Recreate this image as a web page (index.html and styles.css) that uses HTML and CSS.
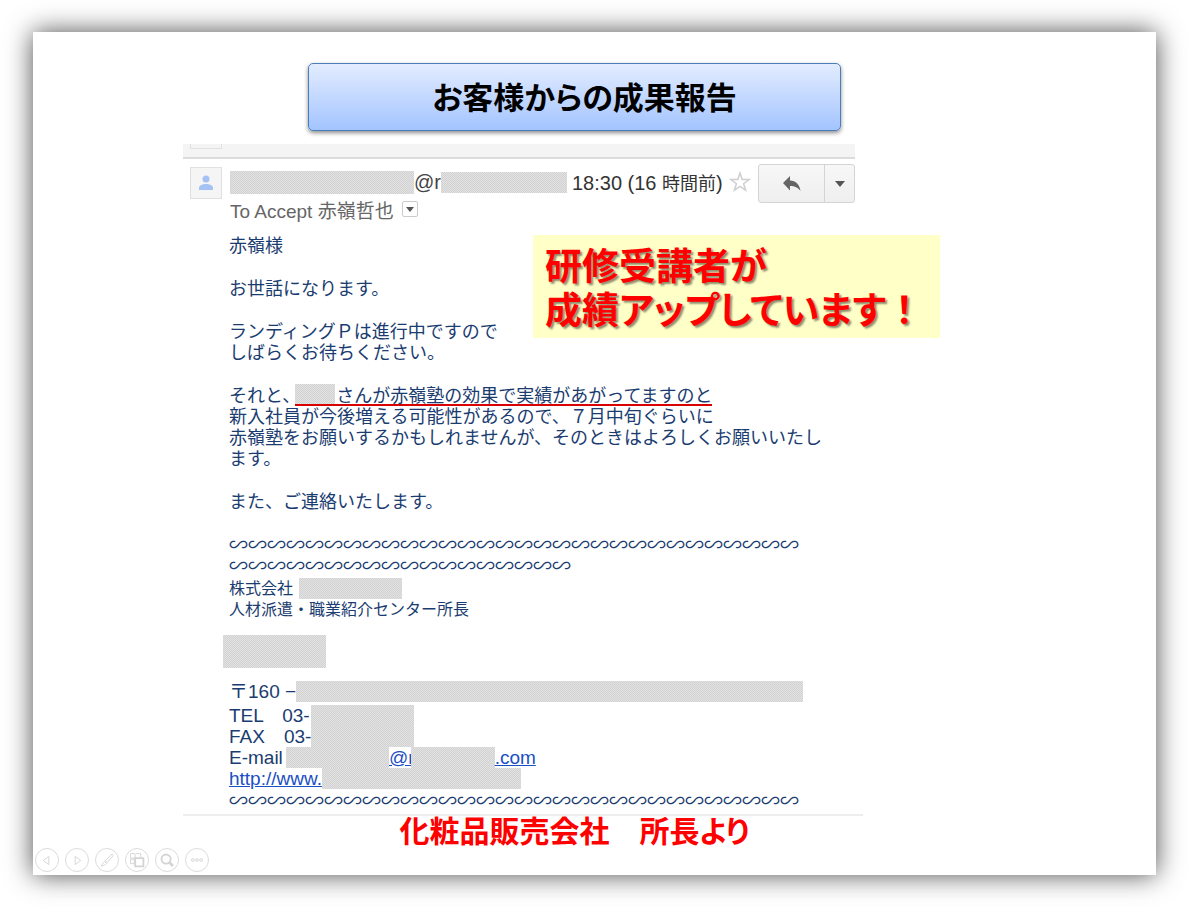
FILE: index.html
```html
<!DOCTYPE html>
<html lang="ja">
<head>
<meta charset="UTF-8">
<meta name="viewport" content="width=device-width, initial-scale=1.0">
<title>お客様からの成果報告</title>
<link rel="stylesheet" href="styles.css">
</head>
<body>

<main class="slide">
  <div class="slide-content">
    <h1 class="slide-title">お客様からの成果報告</h1>

    <article class="mail">
      <div class="mail-previous"><div class="previous-avatar"></div></div>

      <header class="mail-header">
        <div class="avatar">
          <svg width="16" height="16" viewBox="0 0 16 16" fill="#a4c2f4"><circle cx="8" cy="4" r="3.5"/><path d="M1 15v-2c0-3 4-4 7-4s7 1 7 4v2z"/></svg>
        </div>
        <div class="mail-meta">
          <div class="sender">
            <span class="mask mask-user"></span>@r<span class="mask mask-domain"></span>
            <span class="time">18:30 (16 <span class="ja">時間前</span>)</span>
            <button type="button" class="star" aria-label="スター">
              <svg width="22" height="22" viewBox="0 0 22 22" fill="#fff" stroke="#cfcfcf" stroke-width="1.5"><path d="M11 2l2.200 6.400 6.800.1-5.400 4.200 2 6.500-5.600-3.900-5.600 3.900 2-6.500L2 8.500l6.800-.1z"/></svg>
            </button>
          </div>
          <div class="recipient">To Accept 赤嶺哲也
            <button type="button" class="details" aria-label="詳細を表示"><svg width="8" height="5" viewBox="0 0 8 5" fill="#555"><path d="M0 0h8L4 5z"/></svg></button>
          </div>
        </div>
        <div class="mail-actions">
          <button type="button" class="reply" aria-label="返信">
            <svg width="20" height="16" viewBox="0 0 20 16" fill="#666"><path d="M8 0v4.500c5.500.3 9.500 3.500 10.500 10.500C16 11.500 13 10 8 10v4.500L1 7z"/></svg>
          </button>
          <button type="button" class="more" aria-label="その他"><svg width="10" height="6" viewBox="0 0 10 6" fill="#555"><path d="M0 0h10L5 6z"/></svg></button>
        </div>
      </header>

      <div class="mail-body">
        <p>赤嶺様</p>
        <p>お世話になります。</p>
        <p>ランディングＰは進行中ですので<br>しばらくお待ちください。</p>
        <p>それと、<span class="highlight"><span class="mask mask-name"></span>さんが赤嶺塾の効果で実績があがってますのと</span><br>新入社員が今後増える可能性があるので、７月中旬ぐらいに<br>赤嶺塾をお願いするかもしれませんが、そのときはよろしくお願いいたし<br>ます。</p>
        <p>また、ご連絡いたします。</p>

        <div class="wave">∽∽∽∽∽∽∽∽∽∽∽∽∽∽∽∽∽∽∽∽∽∽∽∽∽∽∽∽∽∽<br>∽∽∽∽∽∽∽∽∽∽∽∽∽∽∽∽∽∽</div>
        <div class="company">
          <div class="row">株式会社<span class="mask mask-company"></span></div>
          <div class="row">人材派遣・職業紹介センター所長</div>
        </div>
        <div class="mask mask-person"></div>
        <address class="contact">
          <div class="row row-postal"><span class="label-postal">〒160 −</span><span class="mask mask-address"></span></div>
          <div class="row"><span class="label-phone">TEL　03-</span><span class="mask mask-phone"></span></div>
          <div class="row"><span class="label-phone">FAX　03-</span><span class="mask mask-phone"></span></div>
          <div class="row"><span class="label-mail">E-mail</span><span class="mask mask-phone"></span><a href="#">@r</a><span class="mask mask-host"></span><a href="#">.com</a></div>
          <div class="row"><a href="#">http://www.</a><span class="mask mask-url"></span></div>
        </address>
        <div class="wave">∽∽∽∽∽∽∽∽∽∽∽∽∽∽∽∽∽∽∽∽∽∽∽∽∽∽∽∽∽∽</div>
      </div>
    </article>

    <p class="callout">研修受講者が<br>成績アップしています<span class="mark">！</span></p>
    <p class="source">化粧品販売会社　所長より</p>
  </div>

  <nav class="slide-nav">
    <button type="button" aria-label="前へ"><svg viewBox="0 0 24 24"><path d="M14 8v9l-6-4.500z"/></svg></button>
    <button type="button" aria-label="次へ"><svg viewBox="0 0 24 24"><path d="M10 8v9l6-4.500z"/></svg></button>
    <button type="button" aria-label="ペン"><svg viewBox="0 0 24 24"><path d="M17.500 5.500l1.500 1.500-7 8-2-2zM9.500 13.500l2 2c-1 2-3 2.500-6 3 2-1.500 2-4 4-5z"/></svg></button>
    <button type="button" aria-label="一覧"><svg viewBox="0 0 24 24"><path d="M5 5h5v5H5zM11 5h5v4M5 11h4v5H5z"/><path d="M10 10h9v9h-9z" stroke-width="2"/></svg></button>
    <button type="button" aria-label="拡大"><svg viewBox="0 0 24 24"><circle cx="11" cy="11" r="5" stroke-width="2"/><path d="M14.500 14.500l4 4" stroke-width="3"/></svg></button>
    <button type="button" aria-label="メニュー"><svg viewBox="0 0 24 24"><circle cx="7.500" cy="12" r="1.500"/><circle cx="12" cy="12" r="1.500"/><circle cx="16.500" cy="12" r="1.500"/></svg></button>
  </nav>
</main>

</body>
</html>
```
FILE: styles.css
```css
* {
  box-sizing: border-box;
}

body {
  margin: 0;
  background: #fff;
  font-family: "Liberation Sans", "Noto Sans CJK JP", sans-serif;
}

h1, p {
  margin: 0;
}

button {
  padding: 0;
  border: none;
  background: none;
  cursor: pointer;
}

svg {
  display: block;
}

.slide {
  display: flex;
  flex-direction: column;
  min-height: calc(100vh - 64px);
  margin: 32px 33px;
  background: #fff;
  box-shadow: 0 0 25px rgba(0, 0, 0, 0.7);
}

.slide-content {
  position: relative;
  padding: 31px 190px 0 150px;
}

.slide-title {
  max-width: 533px;
  margin: 0 auto 13px;
  padding: 4px 0 0 20px;
  border: 1px solid #4a7ebb;
  border-radius: 5px;
  background: linear-gradient(#e3ecff, #a3c4ff);
  box-shadow: 0 2px 4px rgba(0, 0, 0, 0.45);
  font-size: 31px;
  font-feature-settings: "palt";
  line-height: 62px;
  text-align: center;
}

/* mail */
.mail {
  max-width: 680px;
  border-bottom: 2px solid #eee;
}

.mail-previous {
  max-width: 672px;
  height: 15px;
  padding-left: 7px;
  border-bottom: 2px solid #dcdcdc;
  background: #f4f4f4;
}

.previous-avatar {
  width: 32px;
  height: 5px;
  border: 1px solid #e0e0e0;
  border-top: none;
}

.mail-header {
  display: flex;
  align-items: flex-start;
  max-width: 672px;
  padding: 5px 0 0 7px;
}

.avatar {
  display: flex;
  align-items: center;
  justify-content: center;
  width: 32px;
  height: 32px;
  margin: 3px 8px 0 0;
  border: 1px solid #e0e0e0;
  background: #f5f5f5;
}

.mail-meta {
  flex: 1;
}

.sender {
  display: flex;
  align-items: center;
  height: 36px;
  color: #444;
  font-size: 20px;
}

.time {
  margin-left: 5px;
  color: #333;
}

.time .ja {
  font-size: 18px;
}

.star {
  margin-left: 6px;
}

.recipient {
  display: flex;
  align-items: center;
  height: 18px;
  color: #666;
  font-size: 19px;
}

.details {
  display: flex;
  align-items: center;
  justify-content: center;
  width: 16px;
  height: 16px;
  margin-left: 8px;
  border: 1px solid #ccc;
  border-radius: 2px;
}

.mail-actions {
  display: flex;
  height: 39px;
  border: 1px solid #d4d4d4;
  border-radius: 3px;
  background: linear-gradient(#f7f7f7, #efefef);
}

.reply,
.more {
  display: flex;
  align-items: center;
  justify-content: center;
}

.reply {
  width: 65px;
}

.more {
  width: 30px;
  border-left: 1px solid #d4d4d4;
}

.mail-body {
  padding: 16px 0 4px 46px;
  color: #1a3c70;
  font-size: 18px;
  line-height: 21px;
}

.mail-body p {
  margin-bottom: 22px;
  font-family: "Noto Sans CJK JP", sans-serif;
  white-space: nowrap;
}

.highlight {
  display: inline-block;
  height: 22px;
  margin: 0 0 -1px -5px;
  border-bottom: 2px solid #d90000;
  vertical-align: top;
}

/* hidden names and addresses */
.mask {
  display: inline-block;
  background: repeating-conic-gradient(#d2d2d2 0 25%, #e2e2e2 0 50%) 0 0 / 2px 2px;
}

.mask-user {
  width: 184px;
  height: 23px;
}

.mask-domain {
  width: 126px;
  height: 21px;
}

.mask-name {
  width: 40px;
  height: 20px;
  margin-right: 1px;
  vertical-align: top;
}

.mask-company {
  width: 103px;
  margin-left: 6px;
}

.mask-person {
  display: block;
  width: 103px;
  height: 33px;
  margin: 15px 0 13px -6px;
}

.mask-address {
  width: 507px;
}

.mask-phone {
  width: 103px;
}

.mask-host {
  width: 84px;
  margin-left: -4px;
}

.mask-url {
  width: 199px;
}

.wave {
  font-family: "Noto Sans CJK JP", sans-serif;
  font-size: 19px;
  white-space: nowrap;
}

.company {
  padding-top: 3px;
  font-size: 16px;
}

.row {
  display: flex;
  white-space: nowrap;
}

.contact {
  font-size: 19px;
  font-style: normal;
}

.contact a {
  color: #1a4fc4;
}

.row-postal {
  padding-bottom: 3px;
}

.label-postal {
  width: 67px;
}

.label-phone {
  width: 82px;
}

.label-mail {
  width: 57px;
}

/* callouts */
.callout {
  position: absolute;
  top: 203px;
  left: 500px;
  width: 407px;
  padding: 11px 12px 4px;
  background: #ffffc8;
  color: #f00;
  font-size: 37px;
  font-weight: bold;
  font-feature-settings: "palt";
  line-height: 44px;
  text-shadow: 2px 2px 2px rgba(0, 0, 0, 0.45);
  white-space: nowrap;
}

.mark {
  font-feature-settings: normal;
}

.source {
  color: #f00;
  font-size: 30px;
  font-weight: bold;
  font-feature-settings: "palt";
  line-height: 32px;
  text-align: center;
}

/* slide show controls */
.slide-nav {
  display: flex;
  gap: 6px;
  margin-top: auto;
  padding: 0 0 3px 2px;
}

.slide-nav button {
  width: 24px;
  height: 24px;
  border: 1px solid #dcdcdc;
  border-radius: 50%;
}

.slide-nav svg {
  width: 22px;
  height: 22px;
  fill: none;
  stroke: #d4d4d4;
}
```
